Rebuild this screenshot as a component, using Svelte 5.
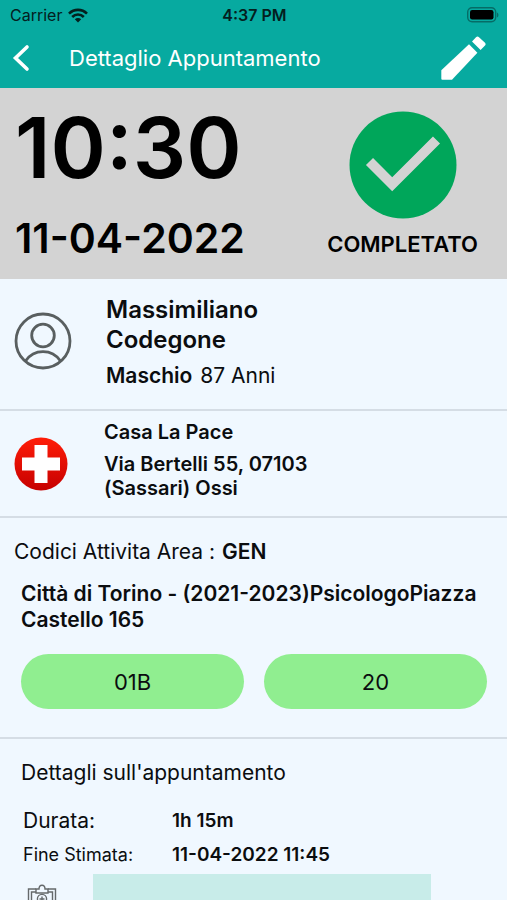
<script lang="ts">
  type Appointment = {
    time: string;
    date: string;
    status: string;
    patient: { name: string; gender: string; age: string };
    place: { name: string; address: string };
    area: string;
    project: string;
    codes: string[];
    duration: string;
    end: string;
  };

  export let appointment: Appointment = {
    time: '10:30',
    date: '11-04-2022',
    status: 'COMPLETATO',
    patient: { name: 'Massimiliano Codegone', gender: 'Maschio', age: '87 Anni' },
    place: { name: 'Casa La Pace', address: 'Via Bertelli 55, 07103 (Sassari) Ossi' },
    area: 'GEN',
    project: 'Città di Torino - (2021-2023)PsicologoPiazza Castello 165',
    codes: ['01B', '20'],
    duration: '1h 15m',
    end: '11-04-2022 11:45',
  };

  let note = '';
</script>

<div class="screen">
  <header>
    <div class="status-bar">
      <span class="carrier">
        Carrier
        <svg width="20" height="15" viewBox="0 0 20 15" aria-hidden="true">
          <g fill="none" stroke="#04201e" stroke-width="2.6">
            <path d="M1 5.6C6 .6 14 .6 19 5.6" />
            <path d="M4.2 9C7.5 5.7 12.5 5.7 15.8 9" />
          </g>
          <path d="M6.8 11.2C8.6 9.5 11.4 9.5 13.2 11.2L10 14.6Z" fill="#04201e" />
        </svg>
      </span>
      <span class="clock">4:37 PM</span>
      <span class="battery">
        <svg width="33" height="16" viewBox="0 0 33 16" aria-hidden="true">
          <rect x="1.7" y=".7" width="28" height="14" rx="4.4" fill="none" stroke="#066c66" stroke-width="1.4" />
          <rect x="4" y="3" width="23.500" height="9.500" rx="2.2" />
          <path d="M31 5.5C32.9 6.2 32.9 9.8 31 10.5Z" fill="#066c66" />
        </svg>
      </span>
    </div>
    <nav>
      <button class="icon-btn back" aria-label="Indietro">
        <svg width="18" height="28" viewBox="0 0 18 28" aria-hidden="true">
          <path d="M15 3L3.5 14L15 25" fill="none" stroke="#fff" stroke-width="3.6" stroke-linecap="round" />
        </svg>
      </button>
      <h1>Dettaglio Appuntamento</h1>
      <button class="icon-btn" aria-label="Modifica">
        <svg width="45" height="44" viewBox="0 0 45 44" fill="#fff" aria-hidden="true">
          <path d="M.3 34.3L28 8.3L36.4 16.7L11 43.8H1.3Q.3 43.8 .3 42.8Z" />
          <path d="M31 5.6L35 1.2Q36.5-.2 38 1.2L44 6.8Q45.2 8.2 44 9.6L39.6 14Z" />
        </svg>
      </button>
    </nav>
  </header>

  <section class="hero">
    <div class="when">
      <time class="time">{appointment.time}</time>
      <time class="date">{appointment.date}</time>
    </div>
    <div class="state">
      <svg width="108" height="108" viewBox="0 0 108 108" aria-hidden="true">
        <circle cx="54" cy="54" r="53.5" fill="#00a65a" />
        <path d="M20.5 50.5L43.2 73.2L87.5 29" fill="none" stroke="#d3d3d3" stroke-width="10" />
      </svg>
      <span>{appointment.status}</span>
    </div>
  </section>

  <section class="patient">
    <svg width="58" height="58" viewBox="0 0 58 58" fill="none" stroke="#595f60" stroke-width="2.8" aria-hidden="true">
      <circle cx="29" cy="29" r="27" />
      <circle cx="29" cy="23.5" r="11.3" />
      <path d="M11.5 49C20 36.5 38 36.5 46.5 49" />
    </svg>
    <div>
      <h2>{appointment.patient.name}</h2>
      <p><b>{appointment.patient.gender}</b> <span>{appointment.patient.age}</span></p>
    </div>
  </section>

  <section class="place">
    <svg width="54" height="54" viewBox="0 0 54 54" aria-hidden="true">
      <defs>
        <linearGradient id="red" x1="0" y1="0" x2="0" y2="1">
          <stop offset="0" stop-color="#ff1d08" />
          <stop offset="1" stop-color="#c60000" />
        </linearGradient>
      </defs>
      <circle cx="27" cy="27" r="26.5" fill="url(#red)" />
      <path d="M20.5 8H33.5V20.5H46V33.5H33.5V46H20.5V33.5H8V20.5H20.5Z" fill="#fff" />
    </svg>
    <div>
      <p class="place-name">{appointment.place.name}</p>
      <p class="address">{appointment.place.address}</p>
    </div>
  </section>

  <section class="activity">
    <p class="area">Codici Attivita Area : <b>{appointment.area}</b></p>
    <p class="project">{appointment.project}</p>
    <div class="codes">
      {#each appointment.codes as code}
        <button class="code">{code}</button>
      {/each}
    </div>
  </section>

  <section class="details">
    <h3>Dettagli sull'appuntamento</h3>
    <dl>
      <dt>Durata:</dt>
      <dd>{appointment.duration}</dd>
      <dt class="small">Fine Stimata:</dt>
      <dd>{appointment.end}</dd>
    </dl>
    <div class="note-row">
      <svg width="30" height="40" viewBox="0 0 30 40" fill="none" stroke="#65696b" stroke-width="1.4" aria-hidden="true">
        <path d="M9 5H1.5V38H28.5V5H21" />
        <path d="M9 8H4.5V35H25.5V8H21" />
        <path d="M9 9V5H12Q12 1.2 15 1.2T18 5H21V9Z" />
        <circle cx="15" cy="15" r="4.6" />
        <path d="M15 12.5V17.5M12.5 15H17.5M8 24H22M8 29H22" />
      </svg>
      <textarea aria-label="Note" bind:value={note}></textarea>
    </div>
  </section>
</div>

<style>
  :global(body) {
    background: #f0f8ff;
  }

  .screen {
    height: 100vh;
    overflow: hidden auto;
    scrollbar-width: none;
    background: #f0f8ff;
    color: #0b0d0f;
    font-family: Inter, 'Liberation Sans', sans-serif;
  }

  h1,
  h2,
  h3,
  p,
  dl,
  dd {
    margin: 0;
  }

  b {
    font-weight: 600;
  }

  svg {
    display: block;
    flex: none;
  }

  header {
    height: 88px;
    background: #07aaa0;
  }

  .status-bar {
    display: grid;
    grid-template-columns: 1fr auto 1fr;
    align-items: center;
    height: 30px;
    padding: 0 8px 0 10px;
    font-size: 16px;
    color: #04201e;
  }

  .carrier {
    display: flex;
    align-items: center;
    gap: 6px;
  }

  .clock {
    font-weight: 600;
  }

  .battery {
    justify-self: end;
  }

  nav {
    display: flex;
    align-items: center;
    height: 55px;
    padding: 0 21px 0 12px;
  }

  h1 {
    flex: 1;
    font-size: 22px;
    font-weight: 400;
    color: #fff;
  }

  .icon-btn {
    padding: 0;
    border: none;
    background: none;
    cursor: pointer;
  }

  .back {
    width: 57px;
  }

  .hero {
    display: flex;
    justify-content: space-between;
    padding: 12px 29px 18px 15px;
    background: #d3d3d3;
    color: #000;
    font-weight: 600;
  }

  .when {
    display: flex;
    flex-direction: column;
    gap: 20px;
  }

  .time {
    font-size: 84px;
    line-height: 96px;
  }

  .date {
    font-size: 41px;
    line-height: 45px;
  }

  .state {
    display: flex;
    flex-direction: column;
    align-items: center;
    gap: 11px;
    padding-top: 11px;
    font-size: 22px;
    line-height: 28px;
  }

  .patient,
  .place,
  .activity {
    border-bottom: 2px solid #d5dde5;
  }

  .patient,
  .place {
    display: flex;
    align-items: center;
    padding: 0 14px;
  }

  .patient {
    gap: 34px;
    padding-top: 12px;
    padding-bottom: 18px;
  }

  .patient div {
    max-width: 220px;
    padding-top: 4px;
  }

  h2 {
    font-size: 24px;
    font-weight: 600;
    line-height: 30px;
  }

  .patient p {
    padding-top: 6px;
    font-size: 21px;
    line-height: 30px;
  }

  .patient p span {
    padding-left: 2px;
  }

  .place {
    gap: 36px;
    font-size: 20px;
    font-weight: 600;
    line-height: 24px;
  }

  .place div {
    max-width: 240px;
    padding: 9px 0 16px;
  }

  .place-name {
    padding-bottom: 8px;
  }

  .activity {
    padding: 20px 20px 28px 21px;
  }

  .area {
    margin-left: -7px;
    font-size: 21px;
    line-height: 28px;
  }

  .area b {
    padding-left: 1px;
  }

  .project {
    padding: 15px 0 21px;
    font-size: 21px;
    font-weight: 600;
    line-height: 26px;
  }

  .codes {
    display: flex;
    gap: 20px;
  }

  .code {
    flex: 1;
    height: 55px;
    border: none;
    border-radius: 28px;
    background: #90ee90;
    color: #0b0d0f;
    font-family: inherit;
    font-size: 22px;
    cursor: pointer;
  }

  .details {
    padding: 20px 21px;
  }

  h3 {
    font-size: 21px;
    font-weight: 400;
    line-height: 28px;
  }

  dl {
    display: grid;
    grid-template-columns: 149px 1fr;
    align-items: center;
    padding: 17px 0 2px 2px;
    line-height: 34px;
  }

  dt {
    font-size: 21px;
  }

  dt.small {
    font-size: 18px;
  }

  dd {
    font-size: 19px;
    font-weight: 600;
  }

  .note-row {
    display: flex;
    gap: 36px;
    padding: 0 55px 0 6px;
  }

  .note-row svg {
    margin-top: 10px;
  }

  textarea {
    flex: 1;
    height: 110px;
    padding: 10px;
    border: none;
    background: #c8ece9;
    font: inherit;
    resize: none;
  }
</style>
